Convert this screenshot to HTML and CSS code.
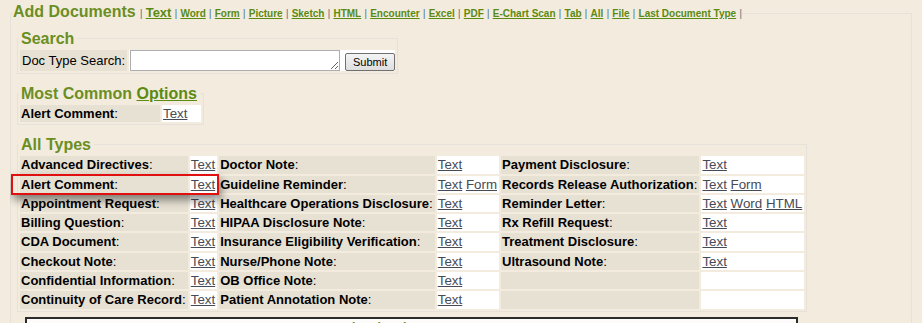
FILE: index.html
```html
<!DOCTYPE html>
<html lang="en">
<head>
    <meta charset="UTF-8">
    <meta name="viewport" content="width=device-width, initial-scale=1.0">
    <title>Add Documents</title>
    <link rel="stylesheet" href="styles.css">
</head>
<body>
    <fieldset class="docs">
        <legend class="docs-title"><span class="title">Add Documents</span><span class="sep"> | </span><a class="big" href="#">Text</a><span class="sep"> | </span><a href="#">Word</a><span class="sep"> | </span><a href="#">Form</a><span class="sep"> | </span><a href="#">Picture</a><span class="sep"> | </span><a href="#">Sketch</a><span class="sep"> | </span><a href="#">HTML</a><span class="sep"> | </span><a href="#">Encounter</a><span class="sep"> | </span><a href="#">Excel</a><span class="sep"> | </span><a href="#">PDF</a><span class="sep"> | </span><a href="#">E-Chart Scan</a><span class="sep"> | </span><a href="#">Tab</a><span class="sep"> | </span><a href="#">All</a><span class="sep"> | </span><a href="#">File</a><span class="sep"> | </span><a href="#">Last Document Type</a><span class="sep"> |</span></legend>

        <fieldset class="group search">
            <legend>Search</legend>
            <table class="grid">
                <tr>
                    <td class="lbl search-lbl">Doc Type Search:</td>
                    <td class="val search-val">
                        <div class="search-box">
                            <textarea rows="1"></textarea>
                            <button type="button">Submit</button>
                        </div>
                    </td>
                </tr>
            </table>
        </fieldset>

        <fieldset class="group common">
            <legend>Most Common <a href="#">Options</a></legend>
            <table class="grid">
                <tr>
                    <td class="lbl common-lbl"><b>Alert Comment</b>:</td>
                    <td class="val common-val"><a href="#">Text</a></td>
                </tr>
            </table>
        </fieldset>

        <fieldset class="group all">
            <legend>All Types</legend>
            <table class="grid">
                <tr>
                    <td class="lbl"><b>Advanced Directives</b>:</td>
                    <td class="val"><a href="#">Text</a></td>
                    <td class="lbl"><b>Doctor Note</b>:</td>
                    <td class="val"><a href="#">Text</a></td>
                    <td class="lbl"><b>Payment Disclosure</b>:</td>
                    <td class="val"><a href="#">Text</a></td>
                </tr>
                <tr>
                    <td class="lbl hl-cell"><b>Alert Comment</b>:<span class="highlight"></span></td>
                    <td class="val"><a href="#">Text</a></td>
                    <td class="lbl"><b>Guideline Reminder</b>:</td>
                    <td class="val"><a href="#">Text</a> <a href="#">Form</a></td>
                    <td class="lbl"><b>Records Release Authorization</b>:</td>
                    <td class="val"><a href="#">Text</a> <a href="#">Form</a></td>
                </tr>
                <tr>
                    <td class="lbl"><b>Appointment Request</b>:</td>
                    <td class="val"><a href="#">Text</a></td>
                    <td class="lbl"><b>Healthcare Operations Disclosure</b>:</td>
                    <td class="val"><a href="#">Text</a></td>
                    <td class="lbl"><b>Reminder Letter</b>:</td>
                    <td class="val"><a href="#">Text</a> <a href="#">Word</a> <a href="#">HTML</a></td>
                </tr>
                <tr>
                    <td class="lbl"><b>Billing Question</b>:</td>
                    <td class="val"><a href="#">Text</a></td>
                    <td class="lbl"><b>HIPAA Disclosure Note</b>:</td>
                    <td class="val"><a href="#">Text</a></td>
                    <td class="lbl"><b>Rx Refill Request</b>:</td>
                    <td class="val"><a href="#">Text</a></td>
                </tr>
                <tr>
                    <td class="lbl"><b>CDA Document</b>:</td>
                    <td class="val"><a href="#">Text</a></td>
                    <td class="lbl"><b>Insurance Eligibility Verification</b>:</td>
                    <td class="val"><a href="#">Text</a></td>
                    <td class="lbl"><b>Treatment Disclosure</b>:</td>
                    <td class="val"><a href="#">Text</a></td>
                </tr>
                <tr>
                    <td class="lbl"><b>Checkout Note</b>:</td>
                    <td class="val"><a href="#">Text</a></td>
                    <td class="lbl"><b>Nurse/Phone Note</b>:</td>
                    <td class="val"><a href="#">Text</a></td>
                    <td class="lbl"><b>Ultrasound Note</b>:</td>
                    <td class="val"><a href="#">Text</a></td>
                </tr>
                <tr>
                    <td class="lbl"><b>Confidential Information</b>:</td>
                    <td class="val"><a href="#">Text</a></td>
                    <td class="lbl"><b>OB Office Note</b>:</td>
                    <td class="val"><a href="#">Text</a></td>
                    <td class="lbl">&nbsp;</td>
                    <td class="val">&nbsp;</td>
                </tr>
                <tr>
                    <td class="lbl"><b>Continuity of Care Record</b>:</td>
                    <td class="val"><a href="#">Text</a></td>
                    <td class="lbl"><b>Patient Annotation Note</b>:</td>
                    <td class="val"><a href="#">Text</a></td>
                    <td class="lbl">&nbsp;</td>
                    <td class="val">&nbsp;</td>
                </tr>
            </table>
        </fieldset>

        <div class="listing">Displaying 23</div>
    </fieldset>
</body>
</html>
```

FILE: styles.css
```css
body {
    margin: 3px 10px 0 10px;
    background: #f3ecde;
    font-family: "Liberation Sans", Arial, sans-serif;
    font-size: 13px;
    color: #000;
}

fieldset {
    border: 1px solid #e6e2da;
    margin: 0;
    padding: 0;
    min-width: 0;
}

/* outer box with the document type links */
.docs {
    padding: 0 0 0 2px;
}

.docs-title {
    padding: 0;
    line-height: 18px;
    white-space: nowrap;
}

.title {
    font-size: 16px;
    font-weight: bold;
    color: #6b8e23;
    margin-right: 1px;
}

.docs-title a {
    font-size: 10px;
    font-weight: bold;
    color: #5b8a12;
}

.docs-title a.big {
    font-size: 13px;
}

.sep {
    font-size: 11px;
    color: #5d7f8c;
    white-space: pre;
}

/* inner groups */
.group {
    width: fit-content;
    margin: 0 0 10px 4px;
}

.group legend {
    padding: 0 3px;
    font-size: 16px;
    font-weight: bold;
    color: #6b8e23;
    line-height: 19px;
}

.group legend a {
    color: #5b8a12;
}

.search {
    margin-top: 6px;
}

.all {
    margin-bottom: 5px;
}

.grid {
    border-spacing: 2px;
}

.grid td {
    padding: 1px 2px 1px 1px;
    font-size: 13.33px;
    line-height: 15.3px;
    white-space: nowrap;
}

.grid b {
    font-size: 13px;
}

.lbl {
    background: #e7e1d3;
}

.val {
    background: #fff;
}

.val a {
    color: #474b55;
}

.grid .search-lbl {
    width: 101px;
    padding: 0 2px;
    font-size: 13px;
}

.grid .search-val {
    padding: 0 0 0 1px;
}

.search-box {
    display: flex;
    align-items: flex-end;
    gap: 5px;
}

.search-box textarea {
    width: 210px;
    height: 21px;
    box-sizing: border-box;
    border: 1px solid #abadb3;
    padding: 1px 2px;
    margin: 0;
    font-family: "Liberation Mono", monospace;
    font-size: 13px;
}

.search-box button {
    width: 50px;
    height: 18px;
    padding: 0;
    font-family: "Liberation Sans", Arial, sans-serif;
    font-size: 11px;
    color: #000;
    background: linear-gradient(#f4f4f4, #dedede);
    border: 1px solid #707070;
    border-radius: 2px;
}

.grid .common-lbl {
    width: 137px;
}

.grid .common-val {
    width: 36px;
}

/* red box drawn over the selected row */
.hl-cell {
    position: relative;
}

.highlight {
    position: absolute;
    left: -9px;
    top: -2px;
    width: 208px;
    height: 21px;
    box-sizing: border-box;
    border: 2px solid #e01010;
    box-shadow: 2px 5px 8px rgba(0, 0, 0, 0.45);
    pointer-events: none;
}

.listing {
    width: 773px;
    box-sizing: border-box;
    margin-left: 12px;
    border: 2px solid #2b2b2b;
    background: #fdfcfa;
    color: #6b8e23;
    font-size: 20px;
    line-height: 23px;
    text-align: center;
    padding: 0 29px 0 0;
    height: 60px;
}
```
